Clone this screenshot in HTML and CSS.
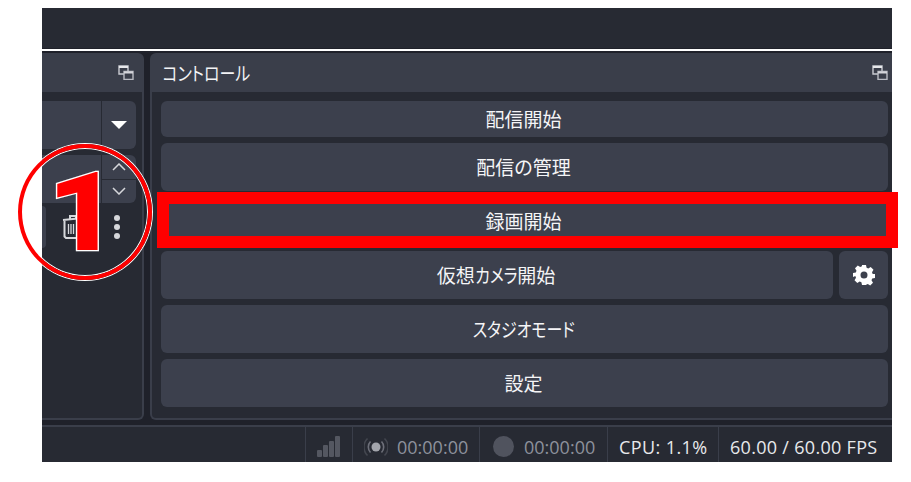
FILE: index.html
```html
<!DOCTYPE html>
<html lang="ja">
<head>
<meta charset="utf-8">
<title>コントロール</title>
<link rel="stylesheet" href="styles.css">
</head>
<body>
<div class="app">
  <div class="menubar"></div>
  <div class="rule"></div>
  <div class="docks">
    <section class="dock dock-left">
      <header class="dock-head">
        <svg class="float-icon" viewBox="0 0 16 15"><path d="M1 1h9v8H1z" fill="none" stroke="#c9cbd2" stroke-width="1.4"/><path d="M1 1h9v2H1z" fill="#e6e7ea"/><path d="M6 6.500h9v8H6z" fill="#3a3e4a" stroke="#b9bbc3" stroke-width="1.400"/><path d="M6 6.500h9v2H6z" fill="#d4d5da"/></svg>
      </header>
      <div class="dock-body left-body">
        <div class="combo"><span class="combo-field"></span><span class="combo-arrow"><svg width="16" height="8" viewBox="0 0 16 8"><path d="M0 0h16L8 8z" fill="#fff"/></svg></span></div>
        <div class="spin"><span class="combo-field"></span><span class="spin-btns">
          <span class="spin-btn"><svg width="14" height="8" viewBox="0 0 14 8"><path d="M1 7l6-6 6 6" fill="none" stroke="#d6d7db" stroke-width="1.500"/></svg></span>
          <span class="spin-btn"><svg width="14" height="8" viewBox="0 0 14 8"><path d="M1 1l6 6 6-6" fill="none" stroke="#d6d7db" stroke-width="1.500"/></svg></span>
        </span></div>
        <div class="tools">
          <span class="tool-stub"></span>
          <svg class="trash" width="22" height="26" viewBox="0 0 22 26"><path d="M1 6l20-2M8 5V2h6v2" fill="none" stroke="#d6d7db" stroke-width="2"/><path d="M2.500 7v15.500l1.500 1.500h14l1.500-1.500V6" fill="none" stroke="#d6d7db" stroke-width="2"/><path d="M6.500 10v10M9 10v10M11.500 10v10" stroke="#d6d7db" stroke-width="1.300"/></svg>
          <svg class="dots" width="6" height="24" viewBox="0 0 6 24"><circle cx="3" cy="3" r="3" fill="#d6d7db"/><circle cx="3" cy="12" r="3" fill="#d6d7db"/><circle cx="3" cy="21" r="3" fill="#d6d7db"/></svg>
        </div>
      </div>
    </section>
    <section class="dock dock-right">
      <header class="dock-head">
        <h2 class="dock-title"><span class="kana kana-long">コントロール</span></h2>
        <svg class="float-icon" viewBox="0 0 16 15"><path d="M1 1h9v8H1z" fill="none" stroke="#c9cbd2" stroke-width="1.400"/><path d="M1 1h9v2H1z" fill="#e6e7ea"/><path d="M6 6.500h9v8H6z" fill="#3a3e4a" stroke="#b9bbc3" stroke-width="1.400"/><path d="M6 6.500h9v2H6z" fill="#d4d5da"/></svg>
      </header>
      <div class="dock-body controls">
        <button class="btn btn-short">配信開始</button>
        <button class="btn">配信の管理</button>
        <button class="btn">録画開始</button>
        <div class="btn-row">
          <button class="btn btn-grow">仮想<span class="kana kana-short">カメラ</span>開始</button>
          <button class="btn btn-gear" aria-label="設定"><svg width="22" height="22" viewBox="0 0 22 22"><path fill="#fff" fill-rule="evenodd" d="M9 1h4l.6 2.800 1.700.7 2.400-1.500 2.800 2.800-1.500 2.400.7 1.700 2.300.1v4l-2.800.6-.7 1.700 1.500 2.400-2.800 2.800-2.400-1.500-1.700.7L13 21H9l-.6-2.800-1.700-.7-2.400 1.500-2.800-2.800 1.500-2.400-.7-1.700L0 13V9l2.800-.6.700-1.700L2 4.300 4.800 1.500l2.400 1.500 1.700-.7zM11 7.500a3.500 3.500 0 1 0 0 7 3.500 3.500 0 0 0 0-7z"/></svg></button>
        </div>
        <button class="btn"><span class="kana kana-long">スタジオモード</span></button>
        <button class="btn">設定</button>
      </div>
    </section>
  </div>
  <footer class="status">
    <div class="cell cell-signal"><svg width="23" height="21" viewBox="0 0 23 21"><g fill="#545761"><rect x="0" y="14" width="5" height="7" rx="1"/><rect x="6" y="9" width="5" height="12" rx="1"/><rect x="12" y="5" width="5" height="16" rx="1"/><rect x="18" y="0" width="5" height="21" rx="1"/></g></svg></div>
    <div class="cell cell-time">
      <svg width="24" height="24" viewBox="0 0 24 24" fill="none"><circle cx="12" cy="12" r="4.500" fill="#a3a5ac"/><path d="M6.500 6.500a8 8 0 0 0 0 11M17.500 6.500a8 8 0 0 1 0 11" stroke="#6e707a" stroke-width="1.600"/><path d="M3.500 3.500a12 12 0 0 0 0 17M20.500 3.500a12 12 0 0 1 0 17" stroke="#43464f" stroke-width="1.600"/></svg>
      <span class="dim">00:00:00</span>
    </div>
    <div class="cell cell-time">
      <span class="rec-dot"></span>
      <span class="dim">00:00:00</span>
    </div>
    <div class="cell cell-cpu">CPU: 1.1%</div>
    <div class="cell cell-fps">60.00 / 60.00 FPS</div>
  </footer>
</div>
<div class="mark-box"></div>
<div class="mark-circle"></div>
<div class="mark-num">1</div>
</body>
</html>
```

FILE: styles.css
```css
* { box-sizing: border-box; }
html, body { margin: 0; padding: 0; }
body {
  background: #fff;
  font-family: "Noto Sans CJK JP", "Open Sans", sans-serif;
  overflow: hidden;
}
.app {
  width: 850px;
  height: 454px;
  margin: 8px 0 0 42px;
  display: flex;
  flex-direction: column;
  background: #1f212a;
  overflow: hidden;
}
.menubar { height: 40px; background: #272a33; }
.rule { height: 2px; margin-top: 1px; background: #fff; }
.docks {
  display: flex;
  gap: 6px;
  padding: 2px 0 5px;
  height: 374px;
}
.dock { display: flex; flex-direction: column; }
.dock-left { width: 102px; }
.dock-right { flex: 1; }
.dock-head {
  height: 39px;
  background: #3a3e4a;
  display: flex;
  align-items: center;
  justify-content: flex-end;
  padding-right: 10px;
}
.dock-left .dock-head { border-top-right-radius: 6px; }
.dock-right .dock-head { border-top-left-radius: 6px; padding-left: 13px; padding-right: 4px; justify-content: space-between; }
.dock-title {
  margin: 0;
  font-size: 19px;
  font-weight: 400;
  color: #f2f3f5;
  font-feature-settings: "palt";
}
.kana { display: inline-block; transform: scaleX(.84); }
.kana-long { margin: 0 -9px; }
.kana-short { margin: 0 -4px; }
.float-icon { width: 16px; height: 15px; }
.dock-body {
  flex: 1;
  background: #272a33;
  padding-top: 9px;
}
.left-body {
  border-right: 2px solid #3a3e4a;
  border-bottom: 2px solid #3a3e4a;
  border-bottom-right-radius: 6px;
  padding-right: 6px;
  display: flex;
  flex-direction: column;
  gap: 6px;
}
.combo, .spin {
  height: 48px;
  display: flex;
  background: #3c404d;
  border-radius: 0 6px 6px 0;
  flex: none;
}
.combo-field { flex: 1; }
.combo-arrow, .spin-btns {
  width: 35px;
  border-left: 1px solid #272a33;
  display: flex;
}
.combo-arrow { align-items: center; justify-content: center; }
.spin-btns { flex-direction: column; }
.spin-btn { flex: 1; display: flex; align-items: center; justify-content: center; }
.spin-btn + .spin-btn { border-top: 1px solid #272a33; }
.tools {
  display: flex;
  align-items: center;
  height: 42px;
  margin-top: -3px;
}
.tool-stub {
  width: 4px;
  height: 42px;
  background: #3c404d;
  border-radius: 0 6px 6px 0;
}
.trash { margin-left: 16px; }
.dots { margin-left: 30px; }
.controls {
  border-left: 2px solid #3a3e4a;
  border-bottom: 2px solid #3a3e4a;
  border-bottom-left-radius: 6px;
  padding-left: 9px;
  padding-right: 4px;
  display: flex;
  flex-direction: column;
  gap: 6px;
}
.btn {
  height: 48px;
  flex: none;
  border: 0;
  border-radius: 6px;
  background: #3c404d;
  color: #f5f5f7;
  font-family: inherit;
  font-size: 19px;
  font-feature-settings: "palt";
  line-height: 1;
  padding: 0 2px 2px 0;
}
.btn-short { height: 36px; }
.btn-row { display: flex; gap: 6px; }
.btn-grow { flex: 1; }
.btn-gear { width: 49px; display: flex; align-items: center; justify-content: center; padding: 0; }
.status {
  flex: 1;
  border-top: 2px solid #3a3e4a;
  background: #272a33;
  display: flex;
  justify-content: flex-end;
  font-family: "Open Sans", sans-serif;
  font-size: 18px;
  color: #e8e9ec;
}
.cell {
  display: flex;
  align-items: center;
  border-left: 1px solid #3a3e4a;
  padding-top: 4px;
}
.cell-signal { width: 47px; padding-left: 11px; }
.cell-time { width: 127px; padding-left: 11px; gap: 9px; }
.cell-time + .cell-time { width: 128px; padding-left: 13px; gap: 10px; }
.cell-cpu { width: 111px; padding-left: 11px; letter-spacing: .4px; }
.cell-fps { width: 174px; padding-left: 11px; letter-spacing: .3px; }
.dim { color: #8d919c; }
.rec-dot { width: 21px; height: 21px; border-radius: 50%; background: #50535e; }
.mark-box {
  position: absolute;
  left: 157px;
  top: 192px;
  width: 741px;
  height: 56px;
  border: 12px solid #f00;
}
.mark-circle {
  position: absolute;
  left: 18px;
  top: 144px;
  width: 134px;
  height: 136px;
  border: 4px solid #f00;
  border-radius: 50%;
  box-shadow: 0 0 0 1px #fff, inset 0 0 0 1px #fff;
}
.mark-num {
  position: absolute;
  left: 51px;
  top: 148px;
  font-family: Roboto, sans-serif;
  font-weight: 900;
  font-size: 110px;
  line-height: 129px;
  color: #f00;
  -webkit-text-stroke: 2.500px #fff;
  paint-order: stroke fill;
  transform: scaleX(1.12);
}
```
